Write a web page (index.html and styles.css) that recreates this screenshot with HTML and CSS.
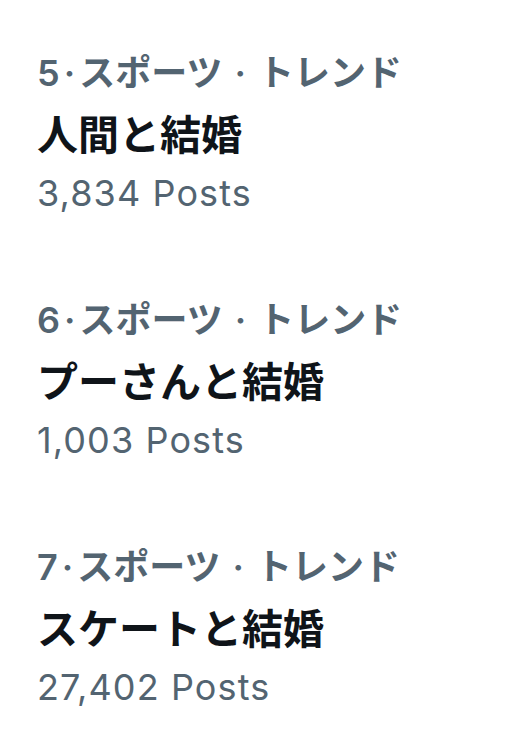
FILE: index.html
```html
<!DOCTYPE html>
<html lang="ja">
<head>
<meta charset="utf-8">
<link rel="stylesheet" href="styles.css">
</head>
<body>
<div class="list">
  <div class="trend">
    <div class="meta">5<span class="dot">·</span>スポーツ<span class="dot2">·</span>トレンド</div>
    <div class="title">人間と結婚</div>
    <div class="count">3,834 Posts</div>
  </div>
  <div class="trend">
    <div class="meta">6<span class="dot">·</span>スポーツ<span class="dot2">·</span>トレンド</div>
    <div class="title">プーさんと結婚</div>
    <div class="count">1,003 Posts</div>
  </div>
  <div class="trend">
    <div class="meta">7<span class="dot">·</span>スポーツ<span class="dot2">·</span>トレンド</div>
    <div class="title">スケートと結婚</div>
    <div class="count">27,402 Posts</div>
  </div>
</div>
</body>
</html>
```

FILE: styles.css
```css
html, body {
  margin: 0;
  padding: 0;
  background: #ffffff;
}
.list {
  padding: 44px 0 0 37px;
  font-family: "Inter", "Noto Sans CJK JP", sans-serif;
}
.trend {
  padding-bottom: 70px;
}
.trend:last-child {
  padding-bottom: 0;
}
.meta {
  font-size: 36px;
  line-height: 58px;
  color: #536471;
  font-weight: 600;
  white-space: nowrap;
}
.dot {
  margin: 0 4px 0 4px;
}
.dot2 {
  margin: 0 12px 0 12px;
}
.title {
  font-family: "Noto Sans CJK JP", sans-serif;
  font-size: 41px;
  font-weight: 700;
  line-height: 60px;
  color: #0f1419;
  white-space: nowrap;
}
.count {
  margin-top: 3px;
  font-size: 36px;
  line-height: 56px;
  letter-spacing: 1.1px;
  color: #536471;
  white-space: nowrap;
}
```
